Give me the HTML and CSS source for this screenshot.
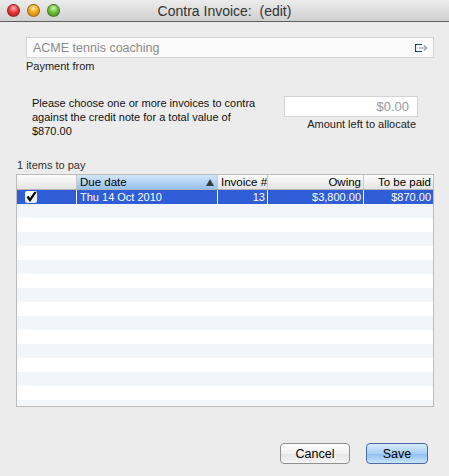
FILE: index.html
```html
<!DOCTYPE html>
<html>
<head>
<meta charset="utf-8">
<link rel="stylesheet" href="styles.css">
</head>
<body>
<div class="window">
  <div class="titlebar">
    <div class="lights">
      <span class="light red"></span>
      <span class="light yellow"></span>
      <span class="light green"></span>
    </div>
    <div class="title">Contra Invoice:&nbsp; (edit)</div>
  </div>
  <div class="content">
    <div class="from-field">
      <span class="from-text">ACME tennis coaching</span>
      <svg class="goto" width="13" height="8" viewBox="0 0 13 8">
        <path d="M7 0.5 H0.5 V7.5 H7" fill="none" stroke="#1d3c6e" stroke-width="1.2"/>
        <path d="M4 4 H11" stroke="#9aa4b4" stroke-width="1.2"/>
        <path d="M9 1.5 L11.8 4 L9 6.5" fill="none" stroke="#9aa4b4" stroke-width="1.2"/>
      </svg>
    </div>
    <div class="from-label">Payment from</div>

    <div class="alloc-row">
      <div class="instructions">Please choose one or more invoices to contra against the credit note for a total value of $870.00</div>
      <div class="amount-group">
        <div class="amount-field">$0.00</div>
        <div class="amount-label">Amount left to allocate</div>
      </div>
    </div>

    <div class="count">1 items to pay</div>

    <div class="table">
      <div class="row header">
        <div class="cell c1"></div>
        <div class="cell c2 sorted"><span>Due date</span><span class="tri"></span></div>
        <div class="cell c3">Invoice #</div>
        <div class="cell c4 right">Owing</div>
        <div class="cell c5 right">To be paid</div>
      </div>
      <div class="row selected">
        <div class="cell c1"><span class="check">
          <svg width="12" height="12" viewBox="0 0 12 12"><path d="M2.5 5.5 L5 9 L10.5 1" fill="none" stroke="#000" stroke-width="2.2"/></svg>
        </span></div>
        <div class="cell c2">Thu 14 Oct 2010</div>
        <div class="cell c3 right">13</div>
        <div class="cell c4 right">$3,800.00</div>
        <div class="cell c5 right">$870.00</div>
      </div>
      <div class="stripes"></div>
    </div>

    <div class="buttons">
      <button class="btn">Cancel</button>
      <button class="btn primary">Save</button>
    </div>
  </div>
</div>
</body>
</html>
```

FILE: styles.css
```css
* { box-sizing: border-box; }
html, body { margin: 0; padding: 0; }
body {
  width: 449px;
  height: 476px;
  background: #ececec;
  font-family: "Liberation Sans", Arial, sans-serif;
  font-size: 11px;
  color: #000;
  overflow: hidden;
}
.window { width: 449px; height: 476px; }
.titlebar {
  height: 22px;
  position: relative;
  background: linear-gradient(#ececec, #d0d0d0);
  border-bottom: 1px solid #5e5e5e;
  display: flex;
  align-items: center;
  justify-content: center;
}
.lights {
  position: absolute;
  left: 7px;
  top: 4px;
  display: flex;
  gap: 7px;
}
.light {
  width: 13px;
  height: 13px;
  border-radius: 50%;
  display: block;
  border: 1px solid rgba(0,0,0,0.35);
}
.red { background: radial-gradient(circle at 50% 30%, #ffb3b3 0%, #e83a3a 45%, #b51515 100%); }
.yellow { background: radial-gradient(circle at 50% 30%, #ffe9a8 0%, #f0a91c 45%, #c57a08 100%); }
.green { background: radial-gradient(circle at 50% 30%, #d6f5b0 0%, #6cc13a 45%, #3a8a17 100%); }
.title {
  font-size: 14px;
  color: #333;
}
.content { padding: 15px 15px 0 16px; }
.from-field {
  margin-left: 10px;
  height: 21px;
  background: #fbfbfb;
  border: 1px solid #d4d4d4;
  display: flex;
  align-items: center;
  justify-content: space-between;
  padding: 0 5px 0 6px;
}
.from-text { font-size: 12.5px; color: #8a8a8a; }
.goto { display: block; }
.from-label { margin-left: 10px; margin-top: 1px; line-height: 14px; color: #222; }
.alloc-row {
  display: flex;
  justify-content: space-between;
  margin-top: 23px;
  padding-left: 16px;
  padding-right: 16px;
}
.instructions {
  width: 240px;
  line-height: 14px;
  color: #111;
}
.amount-group {
  display: flex;
  flex-direction: column;
  align-items: flex-end;
}
.amount-field {
  width: 134px;
  height: 21px;
  background: #fff;
  border: 1px solid #d4d4d4;
  text-align: right;
  padding-right: 8px;
  font-size: 13px;
  color: #9a9a9a;
  line-height: 19px;
}
.amount-label { margin-top: 0; padding-right: 2px; line-height: 14px; color: #222; }
.count { margin-top: 20px; margin-left: 1px; line-height: 14px; color: #333; }
.table {
  margin-top: 2px;
  height: 233px;
  border: 1px solid #bcbcbc;
  background: #fff;
  display: flex;
  flex-direction: column;
  width: 418px;
}
.row { display: flex; }
.cell {
  border-right: 1px solid #d0d0d0;
  padding: 0 2px 0 3px;
  white-space: nowrap;
  overflow: hidden;
}
.c1 { width: 60px; }
.c2 { width: 141px; }
.c3 { width: 50px; }
.c4 { width: 96px; }
.c5 { width: 69px; border-right: none; }
.right { text-align: right; }
.header {
  height: 15px;
  line-height: 14px;
  font-size: 11.5px;
  background: linear-gradient(#fdfdfd, #e4e4e4);
  border-bottom: 1px solid #b4b4b4;
}
.header .cell { border-right-color: #c8c8c8; }
.header .sorted {
  background: linear-gradient(#d3e6fa, #97c1ee);
  display: flex;
  justify-content: space-between;
  align-items: center;
}
.tri {
  width: 0; height: 0;
  border-left: 4px solid transparent;
  border-right: 4px solid transparent;
  border-bottom: 7px solid #3c3c3c;
  margin-right: 1px;
}
.selected {
  height: 14px;
  line-height: 14px;
  background: #2f5dd8;
  color: #fff;
}
.selected .cell { border-right-color: #fff; }
.check {
  display: block;
  margin-left: 5px;
  margin-top: 1px;
  width: 12px;
  height: 12px;
  background: linear-gradient(#fff, #dfe9f7);
  border-radius: 2px;
}
.check svg { display: block; }
.stripes {
  flex: 1;
  background: repeating-linear-gradient(#f2f5fa 0, #f2f5fa 14px, #fff 14px, #fff 28px);
}
.buttons {
  display: flex;
  justify-content: flex-end;
  gap: 16px;
  margin-top: 36px;
  padding-right: 6px;
}
.btn {
  font-family: "Liberation Sans", Arial, sans-serif;
  font-size: 12.5px;
  height: 21px;
  padding: 0;
  border-radius: 4px;
  border: 1px solid #8f8f8f;
  background: linear-gradient(#ffffff, #f0f0f0 50%, #e4e4e4 51%, #f6f6f6);
  color: #000;
  width: 70px;
}
.btn.primary {
  width: 62px;
  border-color: #4b6aa6;
  background: linear-gradient(#d9eafd, #a9cff7 50%, #8cbdf3 51%, #c9e4fc);
}
```
